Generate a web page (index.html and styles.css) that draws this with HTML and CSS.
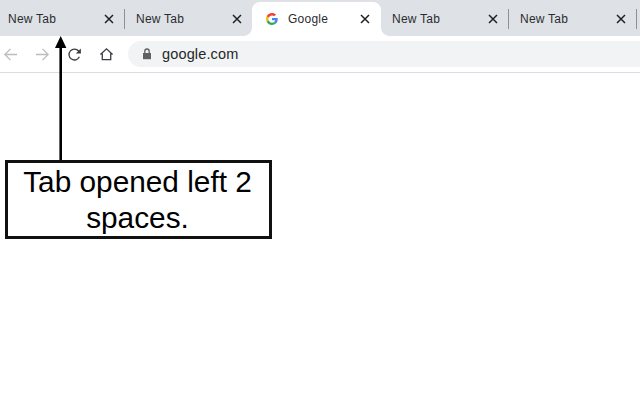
FILE: index.html
```html
<!DOCTYPE html>
<html lang="en">
<head>
    <meta charset="UTF-8">
    <title>Tab opened left 2 spaces</title>
    <link rel="stylesheet" href="styles.css">
</head>
<body>
    <div class="browser">
        <div class="tab-strip">
            <div class="tab tab-first tab-sep">
                <span class="tab-title">New Tab</span>
                <svg class="tab-close" viewBox="0 0 10 10"><path d="M1 1l8 8M9 1l-8 8"/></svg>
            </div>
            <div class="tab tab-second">
                <span class="tab-title">New Tab</span>
                <svg class="tab-close" viewBox="0 0 10 10"><path d="M1 1l8 8M9 1l-8 8"/></svg>
            </div>
            <div class="tab tab-active">
                <svg class="favicon" viewBox="0 0 48 48">
                    <path fill="#EA4335" d="M24 9.500c3.500 0 6.700 1.200 9.200 3.600l6.900-6.900C35.900 2.400 30.500 0 24 0 14.600 0 6.500 5.400 2.600 13.200l8 6.200C12.500 13.600 17.800 9.500 24 9.500z"/>
                    <path fill="#4285F4" d="M46.900 24.500c0-1.600-.1-3.100-.4-4.500H24v9h12.900c-.6 3-2.300 5.500-4.800 7.200l7.700 6c4.500-4.200 7.100-10.300 7.100-17.700z"/>
                    <path fill="#FBBC05" d="M10.600 28.600c-.5-1.400-.8-3-.8-4.600s.3-3.200.8-4.600l-8-6.200C.9 16.500 0 20.100 0 24s.9 7.500 2.600 10.800l8-6.200z"/>
                    <path fill="#34A853" d="M24 48c6.500 0 11.900-2.100 15.900-5.800l-7.700-6c-2.200 1.400-4.900 2.300-8.200 2.300-6.200 0-11.500-4.100-13.400-9.900l-8 6.200C6.500 42.600 14.600 48 24 48z"/>
                </svg>
                <span class="tab-title">Google</span>
                <svg class="tab-close" viewBox="0 0 10 10"><path d="M1 1l8 8M9 1l-8 8"/></svg>
            </div>
            <div class="tab tab-sep">
                <span class="tab-title">New Tab</span>
                <svg class="tab-close" viewBox="0 0 10 10"><path d="M1 1l8 8M9 1l-8 8"/></svg>
            </div>
            <div class="tab tab-sep">
                <span class="tab-title">New Tab</span>
                <svg class="tab-close" viewBox="0 0 10 10"><path d="M1 1l8 8M9 1l-8 8"/></svg>
            </div>
        </div>

        <div class="toolbar">
            <div class="nav-button">
                <svg class="nav-icon nav-disabled" viewBox="0 0 16 16"><path d="M15 8H2M8 2L2 8l6 6"/></svg>
            </div>
            <div class="nav-button">
                <svg class="nav-icon nav-disabled" viewBox="0 0 16 16"><path d="M1 8h13M8 2l6 6-6 6"/></svg>
            </div>
            <div class="nav-button">
                <svg class="nav-icon" viewBox="0 0 16 16"><path d="M13.200 10.500A5.800 5.800 0 1 1 12.400 4.300L14 6"/><path class="nav-fill" d="M14.800 1.500v5.300H9.500z"/></svg>
            </div>
            <div class="nav-button">
                <svg class="nav-icon" viewBox="0 0 16 16"><path d="M1.500 8L8 2l6.500 6M3.500 7v6.500h9V7"/></svg>
            </div>
            <div class="omnibox">
                <svg class="lock" viewBox="0 0 10 12"><path class="lock-body" d="M1 5h8v6.200H1z"/><path class="lock-bow" d="M2.800 5V3.200a2.200 2.200 0 0 1 4.400 0V5"/></svg>
                <span class="url">google.com</span>
            </div>
        </div>
    </div>

    <svg class="arrow" viewBox="0 0 13 124"><path d="M6.700 0l5.700 12H8v112H5.400V12H1z"/></svg>
    <div class="callout">Tab opened left 2 spaces.</div>
</body>
</html>
```
FILE: styles.css
```css
:root {
    --strip: #dee1e6;
    --omnibox: #f1f3f4;
    --line: #dadce0;
    --text: #2b2c2f;
}

* {
    box-sizing: border-box;
    margin: 0;
    padding: 0;
}

body {
    width: 640px;
    height: 400px;
    overflow: hidden;
    position: relative;
    background: #fff;
    font-family: "Liberation Sans", Arial, sans-serif;
    color: var(--text);
}

.tab-strip {
    display: flex;
    height: 36px;
    background: var(--strip);
}

.tab {
    position: relative;
    width: 128px;
    height: 36px;
    padding: 2px 11px 0 11px;
    display: flex;
    align-items: center;
    font-size: 12px;
}

/* cut off by the left edge of the window */
.tab-first {
    width: 125px;
    padding-left: 8px;
}

.tab-second {
    width: 127px;
    padding-right: 10px;
}

.tab-sep::after {
    content: "";
    position: absolute;
    right: 0;
    top: 9px;
    width: 1px;
    height: 20px;
    background: #8f9094;
}

.tab-active {
    width: 129px;
    height: 38px;
    margin-top: 2px;
    padding: 0 11px 4px 14px;
    background: #fff;
    border-radius: 8px 8px 0 0;
}

/* the curves where the active tab meets the strip */
.tab-active::before,
.tab-active::after {
    content: "";
    position: absolute;
    bottom: 4px;
    width: 8px;
    height: 8px;
}

.tab-active::before {
    left: -8px;
    background: radial-gradient(circle at 0 0, transparent 7.500px, #fff 8px);
}

.tab-active::after {
    right: -8px;
    background: radial-gradient(circle at 100% 0, transparent 7.500px, #fff 8px);
}

.tab-title {
    flex: 1;
    letter-spacing: 0.02em;
}

.tab-close {
    width: 10px;
    height: 10px;
    fill: none;
    stroke: #1f2023;
    stroke-width: 1.5;
}

.favicon {
    width: 12px;
    height: 12px;
    margin-right: 10px;
}

.toolbar {
    display: flex;
    height: 37px;
    padding: 5px 0 0;
    margin-left: -6px;
    border-bottom: 1px solid var(--line);
    background: #fff;
}

.nav-button {
    width: 32px;
    height: 26px;
    display: flex;
    align-items: center;
    justify-content: center;
}

.nav-icon {
    width: 15px;
    height: 15px;
    fill: none;
    stroke: #3c3d40;
    stroke-width: 1.4;
}

.nav-disabled {
    stroke: #bcbdc0;
}

.nav-fill {
    fill: #3c3d40;
    stroke: none;
}

.omnibox {
    flex: 1;
    height: 26px;
    margin-left: 6px;
    margin-right: -20px;
    padding-left: 14px;
    display: flex;
    align-items: center;
    gap: 10px;
    background: var(--omnibox);
    border-radius: 13px;
}

.lock {
    width: 10px;
    height: 12px;
}

.lock-body {
    fill: #5f6164;
}

.lock-bow {
    fill: none;
    stroke: #5f6164;
    stroke-width: 1.3;
}

.url {
    font-size: 14.500px;
    letter-spacing: 0.01em;
    color: #26272a;
}

/* annotation drawn over the screenshot */
.arrow {
    position: absolute;
    left: 54px;
    top: 36px;
    width: 13px;
    height: 124px;
    fill: #000;
}

.callout {
    position: absolute;
    left: 5px;
    top: 160px;
    width: 267px;
    height: 79px;
    padding: 1px 8px 0 6px;
    border: 3px solid #111;
    background: #fff;
    color: #000;
    font-size: 29.800px;
    line-height: 36px;
    text-align: center;
}
```
